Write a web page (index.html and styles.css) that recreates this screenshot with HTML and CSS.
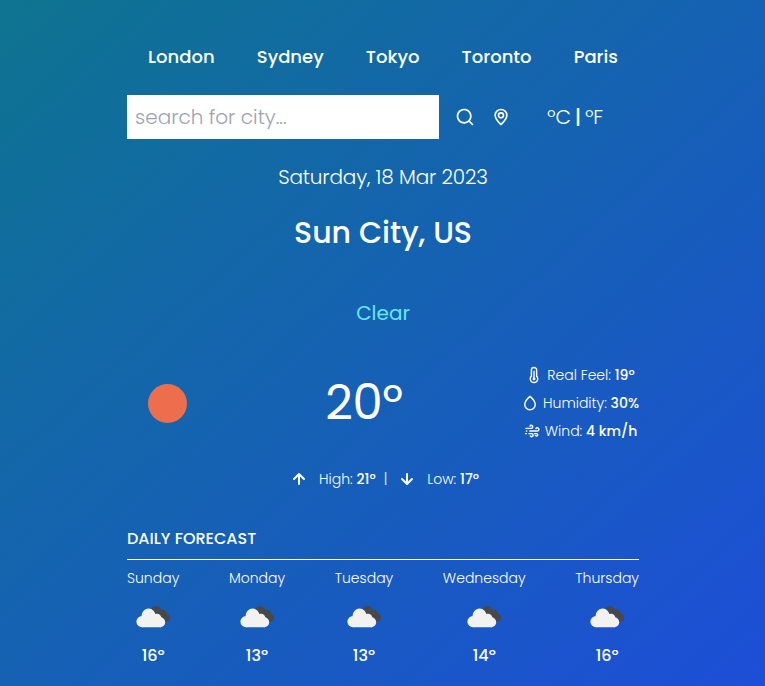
FILE: index.html
```
<!DOCTYPE html>
<html lang="en">
<head>
<meta charset="utf-8">
<title>Weather</title>
<link rel="stylesheet" href="styles.css">
</head>
<body>
<svg class="defs" aria-hidden="true">
  <symbol id="cloud" viewBox="0 0 48 48">
    <g fill="#484848"><circle cx="27" cy="18" r="5"/><circle cx="33.6" cy="20.8" r="4.2"/><circle cx="37" cy="24.7" r="4"/><path d="M25 18l9 1 2 9h-5z"/></g>
    <g fill="#f2f2f2"><circle cx="13" cy="28.6" r="5.6"/><circle cx="19.6" cy="22.6" r="7"/><circle cx="28" cy="25.2" r="4.4"/><circle cx="31.2" cy="29.2" r="5"/><path d="M13 25l10-2 8 3 1 8.2H13z"/></g>
  </symbol>
</svg>
<main class="weather">
  <nav class="cities"><a>London</a><a>Sydney</a><a>Tokyo</a><a>Toronto</a><a>Paris</a></nav>
  <div class="controls">
    <div class="search">
      <input type="text" placeholder="search for city...">
      <svg class="tool" viewBox="0 0 24 24"><path d="M21.71,20.29,18,16.61A9,9,0,1,0,16.61,18l3.68,3.68a1,1,0,0,0,1.42,0A1,1,0,0,0,21.71,20.29ZM11,18a7,7,0,1,1,7-7A7,7,0,0,1,11,18Z"/></svg>
      <svg class="tool" viewBox="0 0 24 24"><path d="M12,2A8,8,0,0,0,4,9.92c0,5.48,7.05,11.58,7.35,11.84a1,1,0,0,0,1.3,0C13,21.5,20,15.4,20,9.92A8,8,0,0,0,12,2Zm0,17.65c-1.67-1.59-6-6-6-9.73a6,6,0,0,1,12,0C18,13.7,13.67,18.06,12,19.65ZM12,6a4,4,0,1,0,4,4A4,4,0,0,0,12,6Zm0,6a2,2,0,1,1,2-2A2,2,0,0,1,12,12Z"/></svg>
    </div>
    <div class="units"><span>ºC</span><span class="bar">|</span><span>ºF</span></div>
  </div>
  <p class="date">Saturday, 18 Mar 2023</p>
  <h1 class="place">Sun City, US</h1>
  <p class="condition">Clear</p>
  <section class="current">
    <span class="sun"></span>
    <p class="temp">20º</p>
    <div class="details">
      <div><svg viewBox="0 0 24 24"><path class="line" d="M8.500 13.500V5.500a3.500 3.500 0 0 1 7 0v8a5 5 0 1 1-7 0zM12 7v9"/><circle cx="12" cy="17" r="2"/></svg>Real Feel: <b>19º</b></div>
      <div><svg viewBox="0 0 24 24"><path class="line" d="M12 3.200C8.500 6.200 5 10 5 14a7 7 0 0 0 14 0c0-4-3.500-7.800-7-10.800z"/></svg>Humidity: <b>30%</b></div>
      <div><svg viewBox="0 0 24 24"><path class="line" d="M4 8.500h7a2 2 0 1 0-1.700-3M9 12h10a2.200 2.200 0 1 0-1.900-3.300M4.500 12h.5M3.500 15.500h1M8 15.500h3.500a2 2 0 1 1-1.700 3M15.500 15.500h2.500a1.600 1.600 0 1 1-1.400 2.400"/></svg>Wind: <b>4 km/h</b></div>
    </div>
  </section>
  <div class="range">
    <svg viewBox="0 0 24 24"><path d="M17.710,11.290l-5-5a1,1,0,0,0-1.420,0l-5,5a1,1,0,0,0,1.420,1.420L11,9.410V17a1,1,0,0,0,2,0V9.410l3.290,3.300a1,1,0,0,0,1.420-1.420Z"/></svg>
    <p>High: <b>21º</b></p><p>|</p>
    <svg class="down" viewBox="0 0 24 24"><path d="M17.710,11.290l-5-5a1,1,0,0,0-1.420,0l-5,5a1,1,0,0,0,1.420,1.420L11,9.410V17a1,1,0,0,0,2,0V9.410l3.290,3.300a1,1,0,0,0,1.420-1.420Z"/></svg>
    <p>Low: <b>17º</b></p>
  </div>
  <h2 class="heading">Daily Forecast</h2>
  <section class="days">
    <div><p>Sunday</p><svg><use href="#cloud"/></svg><b>16º</b></div>
    <div><p>Monday</p><svg><use href="#cloud"/></svg><b>13º</b></div>
    <div><p>Tuesday</p><svg><use href="#cloud"/></svg><b>13º</b></div>
    <div><p>Wednesday</p><svg><use href="#cloud"/></svg><b>14º</b></div>
    <div><p>Thursday</p><svg><use href="#cloud"/></svg><b>16º</b></div>
  </section>
</main>
</body>
</html>
```
FILE: styles.css
```
* { box-sizing: border-box; margin: 0; padding: 0; }
body {
  height: 686px;
  overflow: hidden;
  font-family: Poppins, Inter, "Liberation Sans", sans-serif;
  font-feature-settings: "cv11";
  color: #fff;
  background: linear-gradient(to bottom right, #0e7490, #1d4ed8);
}
.defs { display: none; }
svg { fill: currentColor; flex: none; }
.line { fill: none; stroke: currentColor; stroke-width: 1.9; stroke-linecap: round; stroke-linejoin: round; }
b { font-weight: 500; }
.weather { width: 512px; margin: 0 auto 0 127px; padding-top: 43px; }
.cities { display: flex; justify-content: space-around; font-size: 18px; line-height: 28px; font-weight: 500; }
.controls { display: flex; margin-top: 24px; height: 44px; }
.search { display: flex; width: 384px; align-items: center; gap: 16px; }
.search input {
  width: 312px; height: 44px; padding: 8px; border: 0; background: #fff;
  font: 300 20px/28px Poppins, Inter, sans-serif; font-feature-settings: "cv11";
}
.search input::placeholder { color: #9ca3af; opacity: 1; }
.tool { width: 20px; height: 20px; }
.units { display: flex; flex: 1; align-items: center; justify-content: center; font-size: 20px; font-weight: 300; line-height: 28px; letter-spacing: -0.2px; }
.bar { margin: 0 4px; font-weight: 500; }
.date { margin-top: 24px; font-size: 20px; font-weight: 300; line-height: 28px; letter-spacing: -0.14px; text-align: center; }
.place { margin-top: 24px; font-size: 30px; font-weight: 500; line-height: 36px; text-align: center; }
.condition { margin-top: 48px; font-size: 20px; line-height: 28px; color: #67e8f9; text-align: center; }
.current { display: flex; justify-content: space-between; align-items: center; height: 76px; margin-top: 38px; }
.sun { width: 39px; height: 39px; margin-left: 21px; border-radius: 50%; background: #ec6e4c; }
.temp { font-size: 48px; line-height: 48px; margin-left: 20px; letter-spacing: -0.4px; }
.details { display: flex; flex-direction: column; gap: 8px; }
.details div { display: flex; align-items: center; justify-content: center; font-size: 14px; font-weight: 300; line-height: 20px; white-space: pre; }
.details svg { width: 18px; height: 18px; margin-right: 4px; }
.range { display: flex; align-items: center; justify-content: center; gap: 8px; height: 24px; margin: 26px 0; font-size: 14px; font-weight: 300; line-height: 20px; }
.range svg { width: 24px; height: 24px; }
.down { transform: rotate(180deg); }
.heading { margin-top: 36px; padding-bottom: 8px; border-bottom: 1px solid #fff; font-size: 16px; font-weight: 500; line-height: 24px; text-transform: uppercase; }
.days { display: flex; justify-content: space-between; padding-top: 8px; }
.days div { display: flex; flex-direction: column; align-items: center; }
.days p { font-size: 14px; font-weight: 300; line-height: 20px; }
.days svg { width: 48px; height: 48px; margin: 5px 0 3px; }
.days b { line-height: 24px; }
```
